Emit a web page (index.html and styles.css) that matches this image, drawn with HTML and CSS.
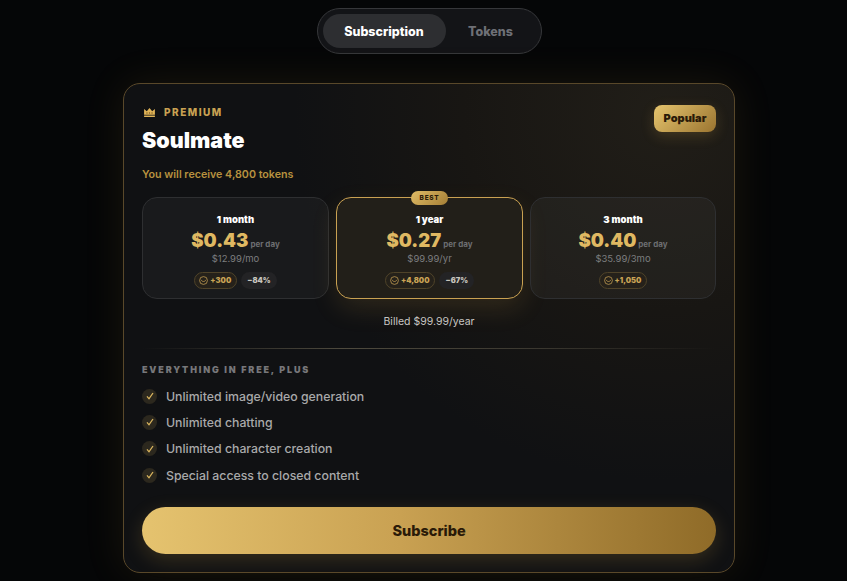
FILE: index.html
```html
<!DOCTYPE html>
<html lang="en">
<head>
    <meta charset="UTF-8">
    <meta name="viewport" content="width=device-width, initial-scale=1.0">
    <title>Soulmate Plans</title>
    <link rel="stylesheet" href="styles.css">
</head>
<body>
    <div class="tabs">
        <button class="tab tab-active">Subscription</button>
        <button class="tab">Tokens</button>
    </div>

    <div class="card">
        <div class="card-head">
            <div>
                <div class="tier">
                    <svg class="crown" viewBox="0 0 12 10"><path d="M0 1l3 2.5L6 0l3 3.5L12 1v6.5H0z" fill="#e0b458"/><rect y="8.4" width="12" height="1.6" fill="#e0b458"/><circle cx="3.2" cy="5.6" r=".8" fill="#7a5a20"/><circle cx="6" cy="5.6" r=".8" fill="#7a5a20"/><circle cx="8.8" cy="5.6" r=".8" fill="#7a5a20"/></svg>
                    <span>PREMIUM</span>
                </div>
                <h1>Soulmate</h1>
            </div>
            <div class="popular">Popular</div>
        </div>
        <div class="receive">You will receive 4,800 tokens</div>

        <div class="plans">
            <div class="plan">
                <div class="plan-name">1 month</div>
                <div class="plan-price"><b>$0.43</b><span>per day</span></div>
                <div class="plan-total">$12.99/mo</div>
                <div class="chips">
                    <span class="chip chip-token"><svg class="coin" viewBox="0 0 12 12"><circle cx="6" cy="6" r="5.2"/><path d="M3 5.2c.8 2.8 5.2 2.8 6 0"/></svg>+300</span>
                    <span class="chip chip-off">−84%</span>
                </div>
            </div>
            <div class="plan plan-best">
                <div class="best">BEST</div>
                <div class="plan-name">1 year</div>
                <div class="plan-price"><b>$0.27</b><span>per day</span></div>
                <div class="plan-total">$99.99/yr</div>
                <div class="chips">
                    <span class="chip chip-token"><svg class="coin" viewBox="0 0 12 12"><circle cx="6" cy="6" r="5.2"/><path d="M3 5.2c.8 2.8 5.2 2.8 6 0"/></svg>+4,800</span>
                    <span class="chip chip-off">−67%</span>
                </div>
            </div>
            <div class="plan">
                <div class="plan-name">3 month</div>
                <div class="plan-price"><b>$0.40</b><span>per day</span></div>
                <div class="plan-total">$35.99/3mo</div>
                <div class="chips">
                    <span class="chip chip-token"><svg class="coin" viewBox="0 0 12 12"><circle cx="6" cy="6" r="5.2"/><path d="M3 5.2c.8 2.8 5.2 2.8 6 0"/></svg>+1,050</span>
                </div>
            </div>
        </div>

        <div class="billed">Billed $99.99/year</div>
        <div class="divider"></div>

        <div class="features-title">EVERYTHING IN FREE, PLUS</div>
        <ul class="features">
            <li><span class="check"><svg viewBox="0 0 10 10"><path d="M2 5.4l2 2.4L8 2"/></svg></span>Unlimited image/video generation</li>
            <li><span class="check"><svg viewBox="0 0 10 10"><path d="M2 5.4l2 2.4L8 2"/></svg></span>Unlimited chatting</li>
            <li><span class="check"><svg viewBox="0 0 10 10"><path d="M2 5.4l2 2.4L8 2"/></svg></span>Unlimited character creation</li>
            <li><span class="check"><svg viewBox="0 0 10 10"><path d="M2 5.4l2 2.4L8 2"/></svg></span>Special access to closed content</li>
        </ul>

        <button class="subscribe">Subscribe</button>
    </div>
</body>
</html>
```

FILE: styles.css
```css
* {
    box-sizing: border-box;
}

html, body {
    height: 581px;
    overflow: hidden;
}

body {
    margin: 0;
    padding: 8px 0 0 11px;
    display: flex;
    flex-direction: column;
    align-items: center;
    background-color: #050607;
    font-family: Inter, "Noto Sans", sans-serif;
    color: #fff;
}

.tabs {
    width: 225px;
    height: 46px;
    padding: 5px;
    display: flex;
    background-color: #131417;
    border: 1px solid #36373a;
    border-radius: 23px;
}

.tab {
    border: none;
    background: none;
    font-family: inherit;
    font-size: 12.5px;
    font-weight: 800;
    color: #6e7076;
    flex: 1;
    padding: 0;
}

.tab-active {
    flex: none;
    width: 123px;
    background-color: #2d2e31;
    border-radius: 18px;
    color: #fff;
}

.card {
    width: 612px;
    height: 490px;
    margin-top: 29px;
    padding: 18px 18px 18px;
    border: 1px solid #59482a;
    border-radius: 17px;
    background: radial-gradient(circle at 88% 6%, #211e18 0, #181613 28%, rgba(16, 17, 19, 0) 52%), #101113;
    box-shadow: 0 0 42px rgba(212, 165, 70, 0.1);
}

.card-head {
    display: flex;
    justify-content: space-between;
    align-items: flex-start;
}

.tier {
    height: 20px;
    display: flex;
    align-items: center;
    gap: 9px;
    margin-left: 2px;
    font-size: 10px;
    font-weight: 800;
    letter-spacing: 1.5px;
    color: #c9a152;
}

.crown {
    width: 11px;
    height: 9px;
}

h1 {
    margin: 4px 0 0;
    font-size: 21.5px;
    line-height: 28px;
    font-weight: 900;
}

.popular {
    width: 62px;
    height: 27px;
    margin: 3px 0 0;
    line-height: 27px;
    text-align: center;
    font-size: 11px;
    font-weight: 900;
    color: #2a1a08;
    background: linear-gradient(135deg, #e6c56e, #9a7430);
    border-radius: 8px;
    box-shadow: 0 4px 14px rgba(212, 165, 70, 0.2);
}

.receive {
    margin-top: 13px;
    height: 16px;
    line-height: 16px;
    font-size: 10.7px;
    font-weight: 600;
    color: #b8913f;
}

.plans {
    display: grid;
    grid-template-columns: 187px 187px 186px;
    gap: 7px;
    margin-top: 14px;
}

.plan {
    position: relative;
    height: 102px;
    padding-top: 15px;
    display: flex;
    flex-direction: column;
    align-items: center;
    background-color: rgba(255, 255, 255, 0.04);
    border: 1px solid #2e2f31;
    border-radius: 15px;
}

.plan-best {
    background-color: #221f19;
    border-color: #c9a152;
    box-shadow: 0 10px 26px rgba(212, 165, 70, 0.14);
}

.best {
    position: absolute;
    top: -7px;
    left: 74px;
    width: 37px;
    height: 14px;
    line-height: 14px;
    text-align: center;
    font-size: 6.5px;
    font-weight: 800;
    letter-spacing: 0.7px;
    color: #2a1a08;
    background: linear-gradient(135deg, #e0bc66, #a57f36);
    border-radius: 7px;
}

.plan-name {
    height: 14px;
    line-height: 14px;
    font-size: 9.5px;
    font-weight: 900;
}

.plan-price {
    display: flex;
    align-items: baseline;
    gap: 2px;
    height: 23px;
    line-height: 23px;
    margin-top: 2px;
}

.plan-price b {
    font-size: 18.5px;
    font-weight: 900;
    color: #dfb862;
}

.plan-price span {
    font-size: 8px;
    font-weight: 700;
    color: #6d6e71;
}

.plan-total {
    height: 14px;
    line-height: 14px;
    font-size: 9.5px;
    color: #7c7d7f;
}

.chips {
    display: flex;
    gap: 4px;
    margin-top: 6px;
}

.chip {
    height: 17px;
    padding: 0 6px;
    display: flex;
    align-items: center;
    gap: 2px;
    border-radius: 9px;
    font-size: 7.5px;
    font-weight: 900;
}

.chip-token {
    color: #c9a355;
    background-color: #25211a;
    border: 1px solid #4f4329;
    padding: 0 5px 0 4px;
}

.chip-off {
    color: #c7c4bd;
    background-color: #232325;
}

.coin {
    width: 9px;
    height: 9px;
    fill: none;
    stroke: #c9a355;
    stroke-width: 1;
}

.billed {
    margin-top: 16px;
    height: 14px;
    line-height: 14px;
    text-align: center;
    font-size: 10.5px;
    color: #c8c8c6;
}

.divider {
    height: 1px;
    margin-top: 19px;
    background: linear-gradient(90deg, rgba(90, 80, 60, 0), #4e4a3e 35%, #3a372f 70%, rgba(90, 80, 60, 0));
}

.features-title {
    margin-top: 14px;
    height: 13px;
    line-height: 13px;
    font-size: 9px;
    font-weight: 900;
    letter-spacing: 1.85px;
    color: #77777a;
}

.features {
    list-style: none;
    margin: 7px 0 0;
    padding: 0;
}

.features li {
    height: 26.3px;
    display: flex;
    align-items: center;
    gap: 9px;
    font-size: 12.3px;
    font-weight: 500;
    color: #a9a9aa;
}

.check {
    width: 15px;
    height: 15px;
    display: flex;
    align-items: center;
    justify-content: center;
    border-radius: 50%;
    background-color: #2c281e;
}

.check svg {
    width: 10px;
    height: 10px;
    fill: none;
    stroke: #dcb75f;
    stroke-width: 1.3;
}

.subscribe {
    display: block;
    width: 574px;
    height: 47px;
    margin-top: 19px;
    border: none;
    border-radius: 24px;
    font-family: inherit;
    font-size: 14.5px;
    font-weight: 800;
    color: #2a1a08;
    background: linear-gradient(90deg, #e5c36f, #c9a152 45%, #8f6b28);
    box-shadow: 0 6px 20px rgba(212, 165, 70, 0.2);
}
```
